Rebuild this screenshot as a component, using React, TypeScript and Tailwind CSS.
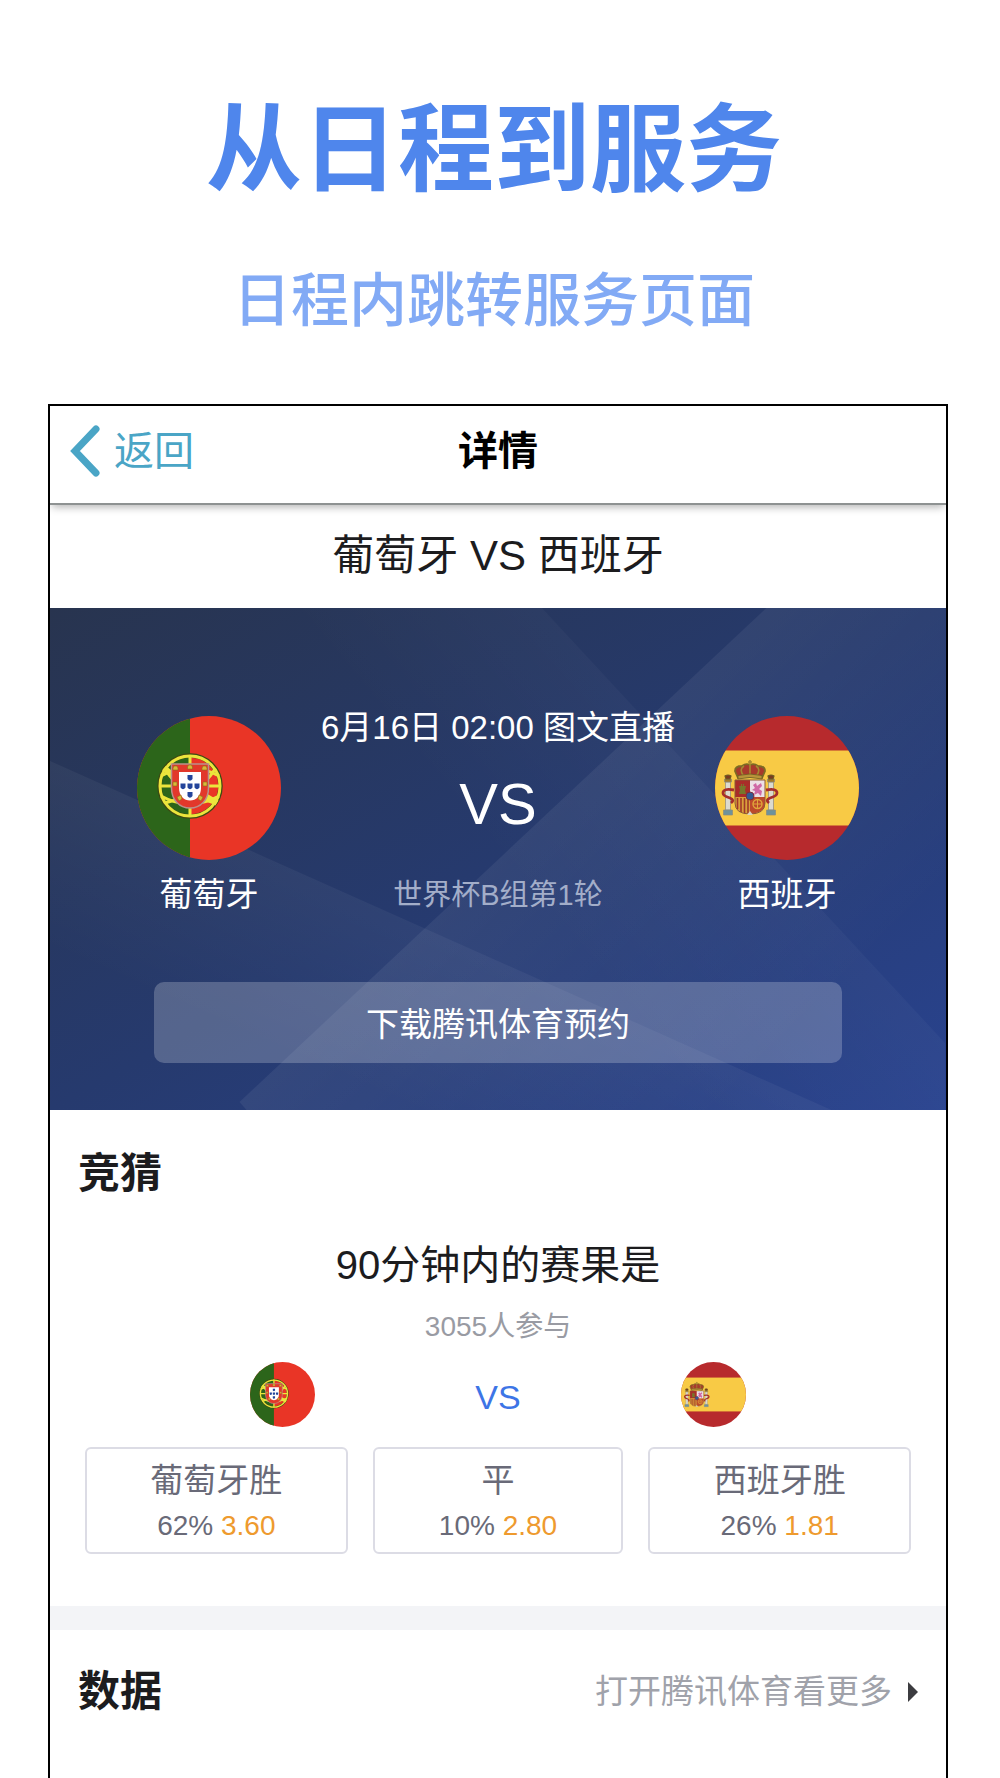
import type { ReactNode } from 'react';

const options = [
  { id: 'home', label: '葡萄牙胜', percent: '62%', odds: '3.60' },
  { id: 'draw', label: '平', percent: '10%', odds: '2.80' },
  { id: 'away', label: '西班牙胜', percent: '26%', odds: '1.81' },
];

function PortugalFlag({ className, clip }: { className: string; clip: string }) {
  return (
    <svg viewBox="0 0 144 144" className={className} role="img" aria-label="葡萄牙国旗">
      <clipPath id={clip}>
        <circle cx="72" cy="72" r="72" />
      </clipPath>
      <g clipPath={`url(#${clip})`}>
        <rect width="144" height="144" fill="#e93526" />
        <rect width="53" height="144" fill="#2c651a" />
      </g>
      {/* 浑天仪 */}
      <g fill="none" stroke="#3d4a12" strokeWidth="4.500">
        <circle cx="53" cy="70" r="30.5" />
      </g>
      <g fill="none" stroke="#ece53c" strokeWidth="3">
        <circle cx="53" cy="70" r="30" />
        <path d="M53 39v62M24 60Q53 44 82 60M24 80Q53 96 82 80M23 70h60" />
        <path d="M28 53Q43 78 78 87M78 53Q63 78 28 87" />
        <path d="M27 52L44 66M63 77l17 10" strokeWidth="6" />
      </g>
      {/* 盾徽 */}
      <path d="M34.500 48h37v24c0 12-8 20-18.500 20s-18.500-8-18.500-20z" fill="#e2382b" stroke="#b9918b" strokeWidth="1.500" />
      <path d="M42 56h22v16c0 8-5 12.500-11 12.500S42 80 42 72z" fill="#fff" />
      <g fill="#d9b83a" stroke="#8d6b16" strokeWidth=".6">
        <path d="M36 54h5v-2l-1-2h-3l-1 2zM50.500 53h5v-2l-1-2h-3l-1 2zM65 54h5v-2l-1-2h-3l-1 2zM36 70h4v-4h-4zM66 70h4v-4h-4zM40 81l4-2 1 4-3 2zM66 81l-4-2-1 4 3 2z" />
      </g>
      <g fill="#24459b">
        <path d="M50.500 59h5v4q-2.500 3.500-5 0zM50.500 67.500h5v4q-2.500 3.500-5 0zM50.500 76h5v4q-2.500 3.500-5 0zM43.500 67.500h5v4q-2.500 3.500-5 0zM57.500 67.500h5v4q-2.500 3.500-5 0z" />
      </g>
    </svg>
  );
}

function SpainFlag({ className, clip }: { className: string; clip: string }) {
  return (
    <svg viewBox="0 0 144 144" className={className} role="img" aria-label="西班牙国旗">
      <clipPath id={clip}>
        <circle cx="72" cy="72" r="72" />
      </clipPath>
      <g clipPath={`url(#${clip})`}>
        <rect width="144" height="144" fill="#b72a2d" />
        <rect y="34.500" width="144" height="75" fill="#f8ca45" />
      </g>
      {/* 立柱 */}
      <g stroke="#8b8a80" strokeWidth=".7">
        <path d="M10.500 66h5v28h-5zM53.500 66h5v28h-5z" fill="#dcdacf" />
        <path d="M8.500 94h9v5h-9zM51.500 94h9v5h-9z" fill="#6d929c" />
        <path d="M9.500 63h7v3h-7zM52.500 63h7v3h-7z" fill="#a77a22" />
      </g>
      <path d="M10 60q3-2 6 0l-1 3h-4zM53 60q3-2 6 0l-1 3h-4z" fill="#7c3a20" stroke="#6b5a22" strokeWidth="1.200" />
      <path d="M19 74Q8 72 8 77q0 3 7 5 5 2 1 5M51 74q11-2 11 3 0 3-7 5-5 2-1 5" fill="none" stroke="#a52e2c" strokeWidth="2.800" />
      {/* 王冠 */}
      <path d="M23 62L20 55q0-5 7-5 4-3 8-1 4-2 8 1 7 0 7 5l-3 7q-12-3-24 0z" fill="#a83a2c" stroke="#7d6a24" strokeWidth="1.800" />
      <path d="M28 59q-4-6 1-9M42 59q4-6-1-9M35 59V44M33 46h4" fill="none" stroke="#a58a32" strokeWidth="1.600" />
      <path d="M23 59.500q12-3 24 0v3.500q-12-3-24 0z" fill="#b8933a" stroke="#6b5a22" strokeWidth=".8" />
      {/* 盾徽 */}
      <path d="M20 64h15v17H20z" fill="#a92d29" />
      <path d="M35 64h15v17H35z" fill="#ece0e6" />
      <path d="M20 81h15v17q-15-1-15-11z" fill="#d9a03b" />
      <path d="M35 81h15v6q0 10-15 11z" fill="#bd4a2b" />
      <path d="M22.500 82v11M26 82v14M29.500 82v15M33 82v15" stroke="#a0392a" strokeWidth="1.600" />
      <path d="M24 70h2v-2h1v2h1v-2h1v2h2l-1 4 1 4h-7l1-4z" fill="#77762b" />
      <path d="M38 69l3-2 1 3 4-3 1 3-3 3 3 2-1 5-3-3-4 2 1-4-3-1 3-2z" fill="#cf68a6" />
      <circle cx="42.500" cy="88" r="4.500" fill="none" stroke="#e0a63b" strokeWidth="1.400" />
      <path d="M38 88h9M42.500 84v9" stroke="#e0a63b" strokeWidth="1" />
      <path d="M20 64h30v23q0 11-15 11T20 87z" fill="none" stroke="#8a5a38" strokeWidth="1" />
      <circle cx="35" cy="80" r="4" fill="#345a94" stroke="#7f2e3a" strokeWidth="1" />
      <path d="M32 99l3-4 3 4z" fill="#d9d4c4" />
    </svg>
  );
}

function PanelFacets() {
  return (
    <svg viewBox="0 0 898 502" preserveAspectRatio="none" className="absolute inset-0 h-full w-full" aria-hidden="true">
      <defs>
        <linearGradient id="facetRight" gradientUnits="userSpaceOnUse" x1="420" y1="200" x2="700" y2="480">
          <stop offset="0" stopColor="#fff" stopOpacity=".07" />
          <stop offset="1" stopColor="#fff" stopOpacity="0" />
        </linearGradient>
        <linearGradient id="facetLeft" gradientUnits="userSpaceOnUse" x1="250" y1="240" x2="170" y2="420">
          <stop offset="0" stopColor="#fff" stopOpacity=".05" />
          <stop offset="1" stopColor="#fff" stopOpacity="0" />
        </linearGradient>
        <linearGradient id="facetTop" gradientUnits="userSpaceOnUse" x1="600" y1="80" x2="420" y2="230">
          <stop offset="0" stopColor="#fff" stopOpacity=".03" />
          <stop offset="1" stopColor="#fff" stopOpacity="0" />
        </linearGradient>
      </defs>
      <path d="M718 0H898V502H197L190 494Z" fill="url(#facetRight)" />
      <path d="M0 153L783 502H0Z" fill="url(#facetLeft)" />
      <path d="M493 0L897 435V502H300L0 200V0Z" fill="url(#facetTop)" />
    </svg>
  );
}

function SectionTitle({ children }: { children: ReactNode }) {
  return <h2 className="text-[42px] leading-[60px] font-bold text-[#1c1c1e]">{children}</h2>;
}

export default function App() {
  return (
    <div className="flex min-h-screen flex-col bg-white font-['Liberation_Sans','Noto_Sans_CJK_SC',sans-serif]">
      {/* 宣传标题 */}
      <header className="pt-[72px] pr-3 text-center font-['STXingkai','Noto_Sans_CJK_SC',cursive]">
        <h1 className="text-[96px] leading-[140px] font-bold text-[#4f86ec]">从日程到服务</h1>
        <p className="mt-[46px] text-[58px] leading-[76px] font-medium text-[#82aaf5]">日程内跳转服务页面</p>
      </header>

      <main className="mx-12 mt-[70px] mr-[52px] flex-1 overflow-hidden border-x-2 border-t-2 border-black">
        {/* 导航栏 */}
        <nav className="relative grid h-[99px] grid-cols-[1fr_auto_1fr] items-center border-b-2 border-[#8e9292] bg-white px-5 pb-2 shadow-[0_4px_8px_-2px_rgba(0,0,0,0.3)]">
          <a href="#back" className="flex items-center gap-[14px] text-[40px] leading-[56px] text-[#4aa5c6]">
            <svg viewBox="0 0 30 52" className="h-[52px] w-[30px]" fill="none" stroke="currentColor" strokeWidth="7" aria-hidden="true">
              <path d="M26 4L5 26l21 22" strokeLinecap="round" />
            </svg>
            返回
          </a>
          <h2 className="text-[40px] leading-[56px] font-bold text-black">详情</h2>
        </nav>

        <h1 className="pt-[21px] pb-[22px] text-center text-[42px] leading-[60px] text-[#1c1c1e]">葡萄牙 VS 西班牙</h1>

        {/* 对阵信息 */}
        <section className="relative bg-linear-to-br from-[#28344f] via-[#263a6e] to-[#29438f] pt-[100px] pb-[47px] text-white">
          <PanelFacets />
          <div className="relative flex items-start justify-between px-[87px]">
            <div className="flex flex-col items-center gap-[10px] pt-2">
              <PortugalFlag className="size-36" clip="portugalLarge" />
              <p className="text-[33px] leading-[50px]">葡萄牙</p>
            </div>
            <div className="flex flex-col items-center">
              <p className="text-[33px] leading-10">6月16日 02:00 图文直播</p>
              <p className="mt-5 text-[58px] leading-[72px]">VS</p>
              <p className="mt-[30px] text-[29px] leading-[50px] text-[#a3aec9]">世界杯B组第1轮</p>
            </div>
            <div className="flex flex-col items-center gap-[10px] pt-2">
              <SpainFlag className="size-36" clip="spainLarge" />
              <p className="text-[33px] leading-[50px]">西班牙</p>
            </div>
          </div>
          <div className="relative mt-[62px] px-[104px]">
            <button className="h-[81px] w-full rounded-[10px] bg-white/22 pt-1 text-[33px] text-white">下载腾讯体育预约</button>
          </div>
        </section>

        {/* 竞猜 */}
        <section className="px-7 pt-[34px] pb-[52px]">
          <SectionTitle>竞猜</SectionTitle>
          <div className="mt-[31px] flex flex-col items-center">
            <h3 className="text-[40px] leading-[60px] text-[#1c1c1e]">90分钟内的赛果是</h3>
            <p className="mt-3 text-[28px] leading-10 text-[#999ba3]">3055人参与</p>
          </div>
          <div className="mt-[15px] flex items-center justify-between px-[172px]">
            <PortugalFlag className="size-[65px]" clip="portugalSmall" />
            <span className="pt-1 text-[34px] leading-10 text-[#3d75e6]">VS</span>
            <SpainFlag className="size-[65px]" clip="spainSmall" />
          </div>
          <div className="mt-5 grid grid-cols-[262fr_250fr_262fr] gap-[25px] px-[7px]">
            {options.map((option) => (
              <button
                key={option.id}
                className="flex h-[107px] flex-col items-center justify-center rounded-md border-2 border-[#dcdce5] pt-1 text-[#696a78]"
              >
                <span className="text-[33px] leading-[46px]">{option.label}</span>
                <span className="text-[28px] leading-[44px]">
                  {option.percent} <span className="text-[#ee9a2e]">{option.odds}</span>
                </span>
              </button>
            ))}
          </div>
        </section>

        <div className="h-6 bg-[#f3f4f7]" />

        {/* 数据 */}
        <section className="flex items-center justify-between px-7 pt-8">
          <SectionTitle>数据</SectionTitle>
          <a href="#more" className="flex items-center gap-4 text-[33px] leading-[50px] text-[#a0a2aa]">
            打开腾讯体育看更多
            <svg viewBox="0 0 10 20" className="h-5 w-[10px]" fill="#3c3c40" aria-hidden="true">
              <path d="M0 0l10 10L0 20z" />
            </svg>
          </a>
        </section>
      </main>
    </div>
  );
}
